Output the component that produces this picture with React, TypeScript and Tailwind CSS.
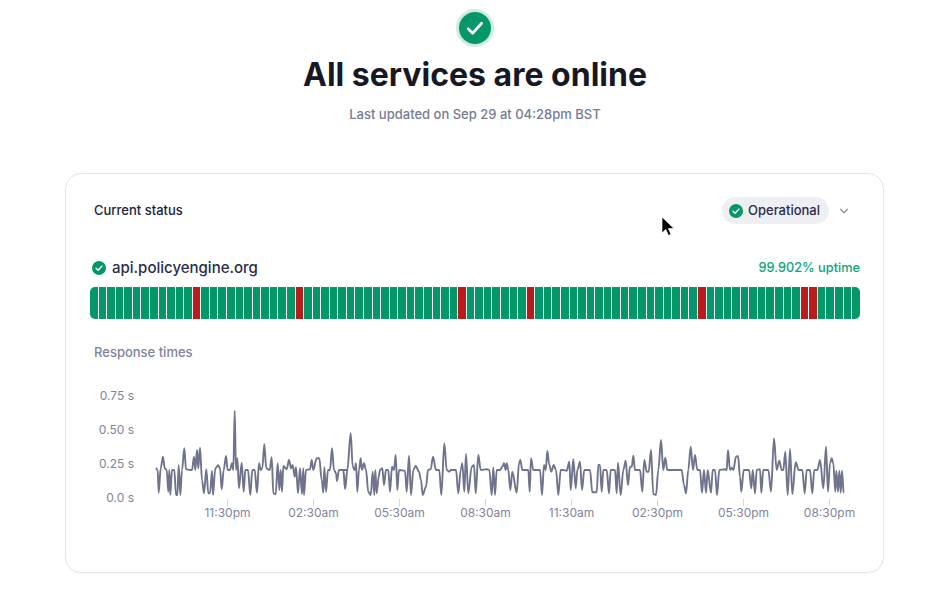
import { ChevronDown } from "lucide-react";

const RED = new Set([12, 24, 43, 51, 71, 83, 84]);
const BARS = Array.from({ length: 90 }, (_, i) => i);

const A = [197,265,203,270,206,338,212,265,219,230,224,265,230,270,235,335,238,270,241,345,246,270,253,270,258,345,262,345,266,256,271,345,276,270,283,205,288,268,300,270,306,270,312,230,316,270,321,210,325,265,330,203,336,300,342,340,349,268,355,340,360,340,366,272,369,345,376,265,385,256,390,265,395,328,401,270,408,228,413,270,420,270,426,250,430,270,434,92,438,270,442,235,447,325,455,248,461,335,466,270,474,270,481,345,487,270,494,270,501,338,507,250,512,270,517,265,523,193,529,265,539,270,545,232,550,340,557,343,563,250,568,330,572,270,576,335,580,258,590,268,597,240,603,265,608,255,614,290,618,262,624,340,630,265,636,342,640,265,642,345,648,270,660,268,665,240,670,270,680,235,688,235,695,300,700,338,703,262,708,335,714,270,720,270,726,205,732,270,738,280,741,303,747,270,760,270,766,325,772,270];
const B = [0,150,10,150,15,207,22,150,32,40,38,140,44,150,48,130,52,215,57,150,62,115,66,150,72,130,78,150,85,215,92,225,98,155,103,225,106,150,110,220,116,170,120,150,127,145,132,195,138,150,145,150,150,215,156,140,162,150,167,105,172,210,177,150,195,152,200,215,207,107,213,225,220,150,227,137,237,155,243,180,248,225,258,200,264,150,272,148,279,110,288,150,298,150,304,225,313,70,320,150,328,155,333,150,348,150,355,220,362,150,367,130,373,215,378,102,385,220,395,140,402,135,407,220,415,105,422,150,440,148,448,150,455,225,460,142,465,225,470,150,480,150,487,140,492,130,497,150,500,130,505,150,511,210,517,155,530,218,537,130,541,120,547,150,565,150,569,215,573,115,580,150,600,150,606,225,612,135,617,150,622,93,628,135,634,155,641,135,648,150,655,225,662,150,670,150,680,152,688,125,692,210,700,118,707,205,712,150,720,125,726,210,733,150,750,150,757,217,770,217,775,135];
const C = [0,135,5,215,10,150,20,150,27,220,32,150,45,150,50,220,54,128,62,225,70,150,77,122,84,195,90,140,95,140,100,107,105,150,120,150,127,215,133,120,140,155,146,155,153,90,160,222,168,225,175,150,183,60,190,150,196,113,202,150,245,150,252,195,258,220,265,150,272,80,279,150,285,105,292,150,300,150,306,218,312,150,318,218,323,150,333,218,338,150,345,150,351,225,358,150,375,148,380,150,384,90,390,150,395,143,400,150,408,110,414,108,420,170,424,215,431,150,447,150,454,205,458,150,465,220,470,150,480,148,484,218,490,150,505,150,513,215,522,55,530,150,538,122,545,150,550,150,556,95,563,225,570,87,577,222,587,127,596,150,607,150,614,220,620,150,630,150,637,220,643,150,652,150,660,120,670,205,678,80,684,215,690,130,695,115,700,130,706,215,709,152,714,215,718,152,722,218,726,152,731,220];

function toPts(a: number[], ox: number, oy: number): [number, number][] {
  const out: [number, number][] = [];
  for (let i = 0; i < a.length; i += 2) {
    out.push([ox + a[i] / 3, oy + a[i + 1] / 3]);
  }
  return out;
}
const PTS = [...toPts(A, 90, 380), ...toPts(B, 340, 420), ...toPts(C, 600, 420)];
const LINE = PTS.map(([x, y], i) => {
  if (i === 0) return `M${x.toFixed(1)} ${y.toFixed(1)}`;
  const [px, py] = PTS[i - 1];
  const k = (x - px) * 0.35;
  return `C${(px + k).toFixed(1)} ${py.toFixed(1)} ${(x - k).toFixed(1)} ${y.toFixed(1)} ${x.toFixed(1)} ${y.toFixed(1)}`;
}).join("");

const YL = [["0.75 s", 395], ["0.50 s", 429], ["0.25 s", 463], ["0.0 s", 497]] as const;
const XL = [["11:30pm", 227.5], ["02:30am", 313.5], ["05:30am", 399.5], ["08:30am", 485.5], ["11:30am", 571.5], ["02:30pm", 657.5], ["05:30pm", 743.5], ["08:30pm", 829.5]] as const;

function Check({ size }: { size: number }) {
  return (
    <svg width={size} height={size} viewBox="0 0 20 20" className="shrink-0">
      <circle cx="10" cy="10" r="10" fill="#059669" />
      <path d="M5.8 10.4l2.9 2.9 5.5-6" fill="none" stroke="#fff" strokeWidth="2" strokeLinecap="round" strokeLinejoin="round" />
    </svg>
  );
}

export default function App() {
  return (
    <div className="relative w-[932px] h-[601px] overflow-hidden bg-white font-['Inter',sans-serif]">
      <div className="w-[950px] flex flex-col items-center">
        <div className="mt-[9px] w-[38px] h-[38px] rounded-full bg-[#d0eae1] flex items-center justify-center">
          <div className="w-[32px] h-[32px] rounded-full bg-[#059669] flex items-center justify-center">
            <svg width="20" height="20" viewBox="0 0 16 16">
              <path d="M2.5 8.6l3.6 3.6 7.2-8" fill="none" stroke="#fff" strokeWidth="2.1" strokeLinecap="round" strokeLinejoin="round" />
            </svg>
          </div>
        </div>
        <h1 className="mt-[6px] text-[32px] leading-[44px] font-bold text-[#181825]">All services are online</h1>
        <p className="mt-[7px] text-[13px] leading-[20px] font-medium text-[#777b94]">Last updated on Sep 29 at 04:28pm BST</p>

        <div className="mt-[49px] ml-[-1px] w-[819px] h-[400px] rounded-2xl border border-[#e3e4ea] pl-[24px] pr-[23px] pt-[23px] flex flex-col shadow-[0_1px_2px_rgba(0,0,0,0.03)]">
          <div className="flex items-center justify-between pl-1 pr-[9px]">
            <span className="text-[13px] font-medium text-[#20223a]">Current status</span>
            <div className="flex items-center gap-[8px]">
              <div className="flex items-center gap-[5px] h-[27px] w-[107px] pl-[7px] rounded-full bg-[#eeeff3]">
                <Check size={14} />
                <span className="text-[13px] font-medium text-[#2a2c48]">Operational</span>
              </div>
              <ChevronDown size={14} className="text-[#8a8ea5]" />
            </div>
          </div>

          <div className="mt-[34px] flex items-center justify-between pl-[2px]">
            <div className="flex items-center gap-[6px]">
              <Check size={14} />
              <span className="text-[15px] leading-[20px] font-medium text-[#2a2c48]">api.policyengine.org</span>
            </div>
            <span className="text-[12.75px] leading-[20px] font-medium text-[#10a37a]">99.902% uptime</span>
          </div>

          <div className="mt-[9px] flex gap-px h-[32px] rounded-[5px] overflow-hidden">
            {BARS.map((i) => (
              <div key={i} className={RED.has(i) ? "flex-1 bg-[#b91c1c]" : "flex-1 bg-[#059669]"} />
            ))}
          </div>

          <div className="mt-[23px] pl-1 text-[13px] leading-[20px] font-medium text-[#7f839b]">Response times</div>

          <svg width="770" height="170" viewBox="90 375 770 170" className="mt-[13px]">
            {XL.map(([l, x]) => (
              <g key={l}>
                <line x1={x} x2={x} y1="499" y2="506" stroke="#d5d7df" strokeWidth="1" />
                <text x={x} y="517" textAnchor="middle" fontSize="12" fill="#7f839b" fontFamily="Inter, sans-serif">{l}</text>
              </g>
            ))}
            {YL.map(([l, y]) => (
              <text key={l} x="134" y={y + 4.5} textAnchor="end" fontSize="12" fill="#7f839b" fontFamily="Inter, sans-serif">{l}</text>
            ))}
            <path d={LINE} fill="none" stroke="#6f748c" strokeWidth="1.9" strokeLinejoin="round" />
          </svg>
        </div>
      </div>

      <svg width="14" height="21" viewBox="0 0 14 21" className="absolute left-[661px] top-[216px]">
        <path d="M1 1v16l3.8-3.6 2.6 6 2.6-1.1-2.6-5.7H13z" fill="#000" stroke="#fff" strokeWidth="0.7" />
      </svg>
    </div>
  );
}
